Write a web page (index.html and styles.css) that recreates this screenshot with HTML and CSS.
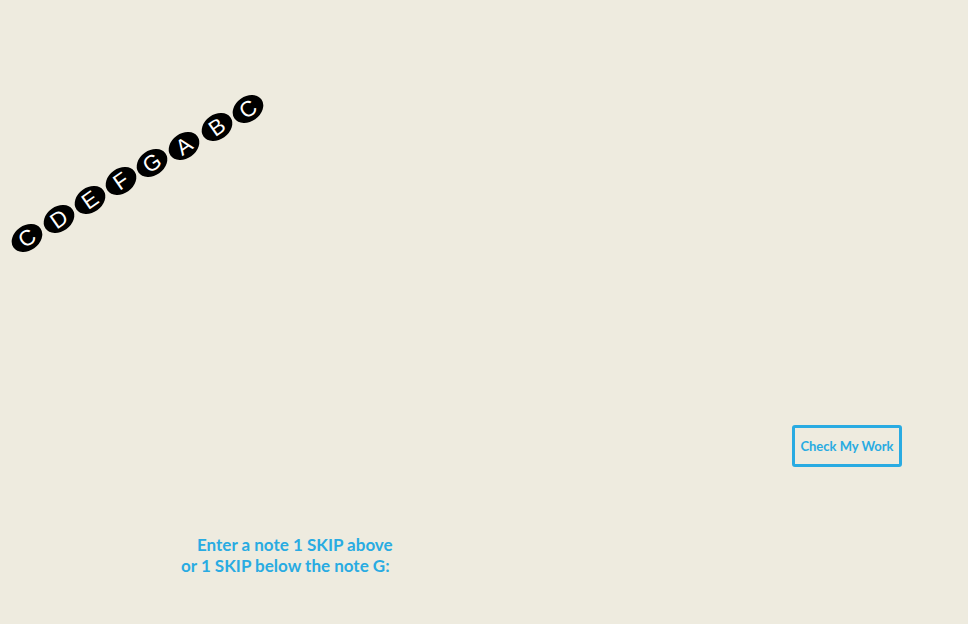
FILE: index.html
```html
<!DOCTYPE html>
<html>
<head>
<meta charset="utf-8">
<link rel="stylesheet" href="styles.css">
</head>
<body>
<div class="stage">
  <svg class="notes" width="290" height="260" viewBox="0 0 290 260">
    <g class="note" transform="rotate(-35 27 238)"><ellipse cx="27" cy="238" rx="16.5" ry="12.5"/><text x="27" y="238">C</text></g>
    <g class="note" transform="rotate(-35 59 219)"><ellipse cx="59" cy="219" rx="16.5" ry="12.5"/><text x="59" y="219">D</text></g>
    <g class="note" transform="rotate(-35 90 200)"><ellipse cx="90" cy="200" rx="16.5" ry="12.5"/><text x="90" y="200">E</text></g>
    <g class="note" transform="rotate(-35 121 181)"><ellipse cx="121" cy="181" rx="16.5" ry="12.5"/><text x="121" y="181">F</text></g>
    <g class="note" transform="rotate(-35 152 163)"><ellipse cx="152" cy="163" rx="16.5" ry="12.5"/><text x="152" y="163">G</text></g>
    <g class="note" transform="rotate(-35 184 146)"><ellipse cx="184" cy="146" rx="16.5" ry="12.5"/><text x="184" y="146">A</text></g>
    <g class="note" transform="rotate(-35 217 127)"><ellipse cx="217" cy="127" rx="16.5" ry="12.5"/><text x="217" y="127">B</text></g>
    <g class="note" transform="rotate(-35 248 109)"><ellipse cx="248" cy="109" rx="16.5" ry="12.5"/><text x="248" y="109">C</text></g>
  </svg>
  <div class="actions"><button class="check">Check My Work</button></div>
  <p class="prompt"><span class="line1">Enter a note 1 SKIP above</span><span class="line2">or 1 SKIP below the note G:</span></p>
</div>
</body>
</html>
```
FILE: styles.css
```css
html, body {
  margin: 0;
  padding: 0;
  background: #eeebdf;
}
.stage {
  width: 968px;
  height: 624px;
  overflow: hidden;
}
.notes {
  display: block;
}
.note ellipse {
  fill: #000;
}
.note text {
  fill: #fff;
  font-family: "Liberation Sans", Arial, sans-serif;
  font-size: 22px;
  text-anchor: middle;
  dominant-baseline: central;
}
.actions {
  display: flex;
  justify-content: flex-end;
  padding-right: 66px;
  margin-top: 165px;
}
.check {
  width: 110px;
  height: 42px;
  border: 3px solid #29abe2;
  border-radius: 3px;
  background: transparent;
  color: #29abe2;
  font-family: Lato, "Open Sans", sans-serif;
  font-weight: bold;
  font-size: 13px;
  padding: 0;
}
.prompt {
  margin: 67px 0 0 0;
  color: #29abe2;
  font-family: Lato, "Open Sans", sans-serif;
  font-weight: bold;
  font-size: 17px;
  line-height: 21px;
}
.line1 {
  display: block;
  padding-left: 197px;
}
.line2 {
  display: block;
  padding-left: 181px;
}
```
